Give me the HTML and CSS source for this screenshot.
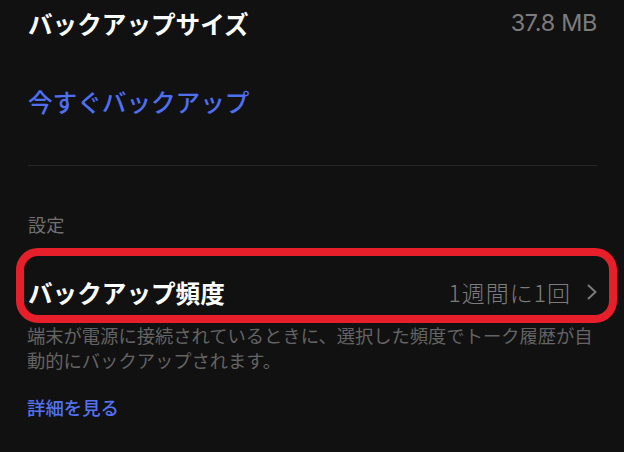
FILE: index.html
```html
<!DOCTYPE html>
<html lang="ja">
<head>
<meta charset="utf-8">
<link rel="stylesheet" href="styles.css">
</head>
<body>
<main class="page">
  <div class="row row-size">
    <span class="label">バックアップサイズ</span>
    <span class="value value-size">37.8 MB</span>
  </div>
  <div class="row row-action">
    <span class="action">今すぐバックアップ</span>
  </div>
  <hr class="divider">
  <div class="section-title">設定</div>
  <div class="row row-setting">
    <span class="label">バックアップ頻度</span>
    <span class="value value-freq">1週間に1回
      <svg class="chevron" width="10" height="16" viewBox="0 0 10 16"><polyline points="1.5,1.5 8.5,8 1.5,14.5" fill="none" stroke="#7a7a7a" stroke-width="2" stroke-linecap="round" stroke-linejoin="round"/></svg>
    </span>
  </div>
  <p class="description">端末が電源に接続されているときに、選択した頻度でトーク履歴が自動的にバックアップされます。</p>
  <div class="link">詳細を見る</div>
</main>
</body>
</html>
```

FILE: styles.css
```css
html, body {
  margin: 0;
  padding: 0;
  background: #111111;
}

body {
  font-family: "Noto Sans CJK JP", sans-serif;
  color: #ffffff;
  width: 624px;
  height: 452px;
  overflow: hidden;
}

.page {
  padding: 0 27px 0 28px;
}

.row {
  display: flex;
  align-items: center;
  justify-content: space-between;
}

.row-size {
  height: 46px;
}

.label {
  font-size: 24.6px;
  font-weight: 700;
  line-height: 1;
  color: #ffffff;
}

.value {
  font-family: Inter, "Noto Sans CJK JP", sans-serif;
  color: #7c7c7c;
  line-height: 1;
}

.value-size {
  font-size: 23.4px;
  font-weight: 400;
  letter-spacing: -0.3px;
}

.row-action {
  height: 46px;
  margin-top: 32px;
}

.action {
  font-size: 24.6px;
  font-weight: 500;
  line-height: 1;
  color: #4f6ff0;
}

.divider {
  border: 0;
  height: 1px;
  background: #262626;
  margin: 41px 0 0 0;
}

.section-title {
  margin-top: 46px;
  font-size: 18.2px;
  line-height: 24px;
  color: #707070;
}

.row-setting {
  position: relative;
  height: 44px;
  margin-top: 34px;
}

.row-setting::after {
  content: "";
  position: absolute;
  top: -22px;
  bottom: -9px;
  left: -12px;
  right: -20px;
  border: 8px solid #e61f2a;
  border-radius: 22px;
  pointer-events: none;
}

.value-freq {
  display: flex;
  align-items: center;
  gap: 16px;
  font-family: "Noto Sans CJK JP", sans-serif;
  font-size: 23px;
  font-weight: 300;
  letter-spacing: 1px;
}

.chevron {
  display: block;
}

.description {
  margin: 8.5px 0 0 -1px;
  font-size: 18.3px;
  line-height: 25px;
  color: #646464;
}

.link {
  margin-top: 22.5px;
  margin-left: -1px;
  font-size: 18.4px;
  line-height: 24px;
  font-weight: 500;
  color: #5272f0;
}
```
